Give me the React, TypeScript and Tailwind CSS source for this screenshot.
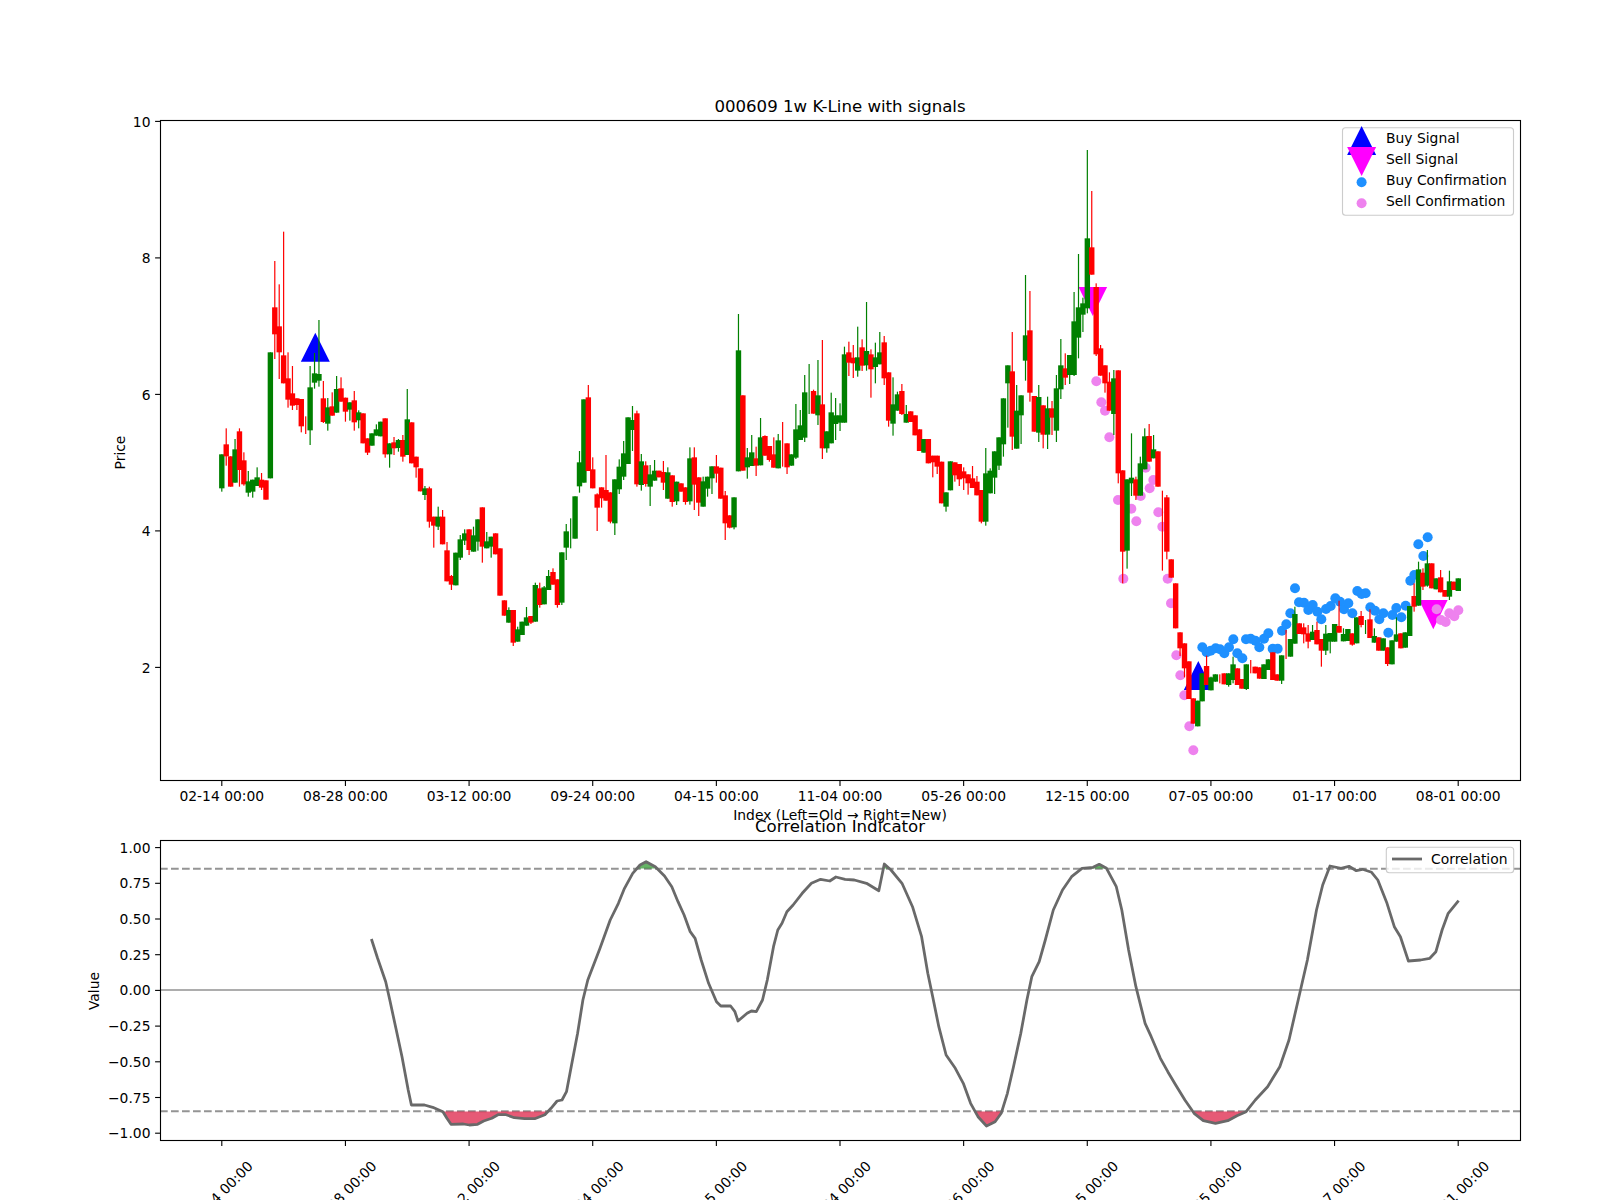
type Row = [number, number, number, number?, number?];
type Seg = { start: number; y0: number; rows: Row[] };

// candle rows: [green?, body top, body bottom, wick top, wick bottom], y in 3x px over y0
const segs: Seg[] = [
  { start: 0, y0: 225, rows: [
    [1,688,790,688,800],[0,658,694,610,722],[0,694,785],[1,673,773,642,773],[0,619,735,610,785],
    [0,706,778,682,782],[1,769,803,738,815],[1,764,800,764,818],[1,757,783,727,783],[0,764,788,744,795],
    [0,766,824],[1,382,760],[0,247,328,108,402],[0,304,382,178,462],[0,391,475,20,475],
    [0,460,524,382,548],[0,505,542,423,555],[0,520,540,520,555],[0,522,604,522,622],[0,600,600,574,627],
    [1,487,616,423,660],[1,445,473,384,491],[1,447,467,285,485],[0,520,591,468,594],[1,547,596,519,617],
    [0,544,572,502,572],[1,492,563,453,563],[0,490,530,457,530],[0,518,560,518,590],[1,532,554,532,587],
    [0,526,592,498,617],[1,562,586,556,610],[0,565,655],[0,640,683,640,690],[1,625,662],
    [1,613,632,598,632],[1,590,634],[0,580,688,580,698],[1,655,688,655,728],[0,652,670,636,690],
    [1,645,669,642,680],
  ] },
  { start: 41, y0: 370, rows: [
    [0,210,260,195,275],[1,148,255,57,255],[0,157,280],[0,260,292,260,323],[0,295,364],
    [1,355,375,348,390],[0,355,455,350,473],[0,440,467,440,533],[1,440,470,410,480],[0,440,523,420,523],
    [0,541,634,516,634],[0,618,644,615,660],[1,548,646],[1,508,563,495,570],[1,490,512,478,525],
    [0,478,540,478,555],[1,496,545,470,545],[1,448,515,448,542],[0,412,530,412,578],[1,514,535,486,535],
    [1,500,530,500,563],[0,490,553],[0,535,677],[0,691,737],[1,720,758,712,758],
    [0,720,818,720,828],[1,778,815,770,815],[1,755,795],[1,742,767,711,767],[0,738,758,738,762],
    [1,645,755,638,755],[0,655,705,638,713],[1,652,703,648,703],[1,618,660,600,660],[0,606,644,595,644],
    [0,628,705,628,713],[1,547,698,547,705],[1,484,533,462,570],[1,500,500,445,535],[1,379,506],
    [1,277,349,243,368],[1,88,338],[0,82,303,45,303],[0,298,355,262,355],[0,373,413,370,483],
    [0,352,385,352,413],[0,360,392,255,392],[0,367,455,367,460],[1,328,460,328,495],[1,290,358,268,372],
    [1,250,320,213,330],[1,142,282],[1,150,180,108,243],[0,130,343,122,350],[1,274,345,252,362],
    [0,286,342,274,350],[1,313,350,285,408],[1,302,332,270,332],[0,302,322],[0,306,338,273,360],
    [1,307,386,292,386],[0,316,396,316,410],[1,335,394,335,405],[0,340,365],[0,352,396,352,404],
    [1,265,394,232,404],[0,262,344,232,420],[0,322,398,322,438],
  ] },
  { start: 109, y0: 290, rows: [
    [1,574,650,560,650],[1,560,596,560,620],[1,529,565,529,612],[0,529,551,495,578],[0,533,626],
    [0,616,700,603,750],[0,676,713,676,715],[1,622,712,622,718],[1,181,544,72,544],[0,316,542],
    [1,502,532,474,566],[1,487,528,435,528],[0,505,527,470,558],[1,442,526,384,526],[0,438,497,436,497],
    [0,468,510,468,515],[0,493,533,442,533],[1,451,535,432,535],[0,500,500,396,530],[0,460,532,460,552],
    [1,493,527],[1,418,503,342,507],[1,406,450,360,450],[1,307,443,255,456],[1,300,300,222,372],
    [0,303,371,299,371],[1,316,376,210,405],[0,343,475,150,507],[1,424,475,424,488],[1,367,460,308,460],
    [1,376,402,324,450],[1,376,398,340,423],[1,193,398,170,398],[0,187,218,155,258],[0,203,220,165,264],
    [1,202,242,110,260],[0,172,227,148,243],[1,183,226,36,242],[0,193,238,178,323],[1,202,231,158,280],
    [1,187,223,126,223],[0,157,265,138,285],[0,247,392,247,410],[1,343,401,262,437],[1,313,362,305,362],
    [0,303,372,282,375],[1,372,398,345,398],[0,364,396],[0,376,436],[0,418,483],
    [1,447,488],[0,447,520],[0,497,517,497,562],[0,497,530,497,552],[0,515,640],
    [1,607,650,607,665],[1,514,601],[0,517,556,517,575],[0,522,568,522,588],[0,544,565,532,600],
    [0,553,580,553,614],[0,565,594,528,594],[0,575,616,558,616],
  ] },
  { start: 172, y0: 140, rows: [
    [0,1050,1145,1050,1150],[1,1000,1145,924,1157],[1,992,1060,985,1060],[1,934,1013,934,1062],[1,892,977,892,990],
    [1,775,913,775,950],[1,676,730,676,863],[0,694,890,576,930],[1,812,926,735,926],[1,766,826,766,912],
    [1,586,662,405,722],[0,571,758,453,785],[0,768,875],[1,771,878,735,906],[0,796,884,796,925],
    [1,805,884,770,927],[0,805,833,783,885],[1,745,872,705,906],[1,676,748,597,777],[0,685,713,640,735],
    [1,645,705,645,732],[1,544,705,456,708],[1,502,593,342,655],[1,490,524,473,576],[1,295,505,30,520],
    [0,322,404,153,404],[0,441,643,430,648],[0,625,707,615,707],[0,676,730,676,758],[0,725,812,697,812],
    [1,715,822,690,885],[0,691,1000,691,1030],[0,991,1235,991,1330],[1,1018,1232,1018,1286],[1,1013,1030,880,1068],
    [0,1018,1067,1010,1080],[1,970,1067,950,1067],[1,889,988,865,988],[0,888,965,852,965],[1,928,955,885,955],
    [0,934,1040],[0,1100,1100,1052,1292],[0,1072,1235,1065,1258],[0,1258,1313],
  ] },
  { start: 216, y0: 540, rows: [
    [0,130,265],[0,277,325,277,348],[0,310,385,310,412],[0,364,477],[0,475,551],
    [1,482,559],[1,400,484],[0,378,435,347,435],[1,412,451,410,451],[1,403,425],
    [0,415,415,403,430],[0,400,433],[1,400,435,400,440],[1,373,420,350,430],[0,385,435],
    [0,417,446],[1,373,447,373,450],[0,380,380,360,400],[0,380,400],[0,382,416],
    [1,373,417],[1,358,390],[0,337,420],[0,403,422],[1,346,422,346,432],
    [0,300,300,270,357],[1,297,350],[1,222,311,200,311],[0,250,282],[0,262,283,250,310],
    [0,280,305,255,325],[1,275,300,255,300],[0,270,313,245,313],[0,297,332,297,380],[1,281,332,255,345],
    [1,279,305,279,340],[1,252,305],[0,258,278,182,278],[1,282,304,265,304],[1,267,303],
    [0,280,314,280,317],[1,232,310],[0,228,255,213,262],[1,260,260,240,282],[0,238,294,208,294],
    [1,288,308,265,308],[0,292,332],[1,295,332],[0,322,372,322,378],[1,301,373],
    [1,283,305,232,305],[0,280,325],[1,277,323],[1,198,288],[0,168,200,130,215],
    [1,88,197,65,197],[0,98,140,85,150],[1,70,137,30,140],[0,70,145],[1,115,148],
    [0,112,157,90,157],[0,150,170],[1,124,170,92,180],[0,125,150],[1,115,153],
  ] },
];

const candles = segs.flatMap((s) =>
  s.rows.map((r, k) => ({
    x: 221.8 + 4.416 * (s.start + k),
    green: r[0] === 1,
    top: s.y0 + r[1] / 3,
    bot: s.y0 + r[2] / 3,
    wt: s.y0 + (r[3] ?? r[1]) / 3,
    wb: s.y0 + (r[4] ?? r[2]) / 3,
  })),
);

// blue dots, 3x px over (1160,540)
const blue = [
  [127,322],[140,337],[152,332],[167,325],[180,328],[193,340],[207,322],[220,298],[232,340],[247,355],
  [258,298],[272,296],[286,302],[298,322],[312,296],[325,280],[338,326],[353,326],[366,272],[379,253],
  [391,220],[405,145],[417,187],[432,188],[445,210],[458,195],[472,215],[484,238],[498,207],[512,198],
  [526,175],[540,185],[552,208],[565,190],[577,220],[592,153],[605,162],[617,160],[631,202],[645,212],
  [658,238],[670,220],[685,278],[697,225],[709,204],[724,232],[737,197],[751,122],[763,105],[775,13],
  [790,48],[803,-8],
].map(([x, y]) => [1160 + x / 3, 540 + y / 3]);

// pink dots, first list 3x px over (980,140), second over (1080,440)
const pink = [
  ...[
    [349,724],[364,787],[375,812],[388,892],[414,1080],[430,1316],[454,1106],[469,1144],[482,1068],[497,983],
    [509,1045],[520,1020],[535,1117],[547,1160],[563,1316],
  ].map(([x, y]) => [980 + x / 3, 140 + y / 3]),
  ...[
    [273,490],[289,646],[301,706],[313,766],[328,859],[340,931],[1070,508],[1083,540],[1097,546],[1108,520],
    [1123,529],[1135,511],
  ].map(([x, y]) => [1080 + x / 3, 440 + y / 3]),
];

// correlation line, taken from two crops with different x scale
const corr = [
  ...[
    [910,507],[925,565],[945,635],[955,690],[970,775],[985,860],[1000,960],[1008,1005],[1040,1005],[1060,1012],
    [1085,1025],[1095,1045],[1105,1063],[1135,1062],[1150,1065],[1170,1063],[1185,1053],[1205,1045],[1220,1034],[1240,1034],
    [1260,1043],[1285,1046],[1310,1046],[1335,1034],[1350,1015],[1365,993],[1377,990],[1388,965],[1398,900],[1415,790],
    [1428,690],[1440,630],[1470,535],[1495,450],[1515,400],[1530,355],[1550,310],[1568,285],
  ].map(([x, y]) => [x / 2.45, 770 + y / 3]),
  ...[
    [10,275],[25,290],[40,318],[52,350],[62,395],[72,435],[82,485],[90,505],[100,570],[112,640],
    [125,695],[132,708],[148,708],[155,725],[160,753],[175,730],[182,723],[190,725],[200,690],[208,630],
    [218,530],[225,480],[232,460],[240,425],[250,405],[265,370],[280,340],[295,328],[310,333],[320,321],
    [335,328],[350,330],[370,340],[390,362],[399,282],[410,300],[428,340],[445,410],[460,500],[470,610],
    [478,680],[488,770],[500,855],[515,895],[528,940],[540,1000],[552,1040],[566,1068],[580,1055],[590,1030],
    [600,970],[610,890],[622,790],[632,690],[640,620],[652,575],[662,510],[675,420],[690,360],[705,320],
    [722,295],[740,292],[750,283],[762,295],[778,350],[787,420],[798,540],[810,650],[825,760],[835,800],
    [850,865],[862,905],[875,945],[890,990],[905,1030],[920,1052],[940,1060],[960,1052],[975,1037],[990,1025],
    [1005,990],[1025,950],[1045,890],[1060,810],[1075,690],[1090,570],[1105,420],[1115,345],[1127,288],[1145,295],
    [1158,289],[1170,302],[1180,298],[1195,307],[1205,330],[1220,400],[1232,470],[1242,500],[1255,573],[1275,570],
    [1290,565],[1300,545],[1310,480],[1320,430],[1337,392],
  ].map(([x, y]) => [640 + x / 1.6333, 770 + y / 3]),
];
const corrPts = corr.map(([x, y]) => `${x.toFixed(1)},${y.toFixed(1)}`).join(' ');

const tickX = Array.from({ length: 11 }, (_, k) => 221.8 + 123.64 * k);
const dates = ['02-14 00:00', '08-28 00:00', '03-12 00:00', '09-24 00:00', '04-15 00:00', '11-04 00:00', '05-26 00:00', '12-15 00:00', '07-05 00:00', '01-17 00:00', '08-01 00:00'];
const priceTicks = [10, 8, 6, 4, 2];
const valueTicks = ['1.00', '0.75', '0.50', '0.25', '0.00', '−0.25', '−0.50', '−0.75', '−1.00'];

function Tri({ x, base, tip, half, color }: { x: number; base: number; tip: number; half: number; color: string }) {
  return <polygon points={`${x - half},${base} ${x + half},${base} ${x},${tip}`} fill={color} />;
}

export default function App() {
  return (
    <div className="h-[1200px] w-[1600px] overflow-hidden bg-white">
      <svg
        width={1600}
        height={1200}
        viewBox="0 0 1600 1200"
        className="block fill-black font-['DejaVu_Sans',sans-serif] text-[13.89px]"
      >
        <defs>
          <clipPath id="under">
            <rect x={160} y={1111.4} width={1360} height={28} />
          </clipPath>
          <clipPath id="over">
            <rect x={160} y={841} width={1090} height={27.6} />
          </clipPath>
        </defs>

        {/* price panel */}
        <text x={840} y={111.7} textAnchor="middle" className="text-[16.6px]">000609 1w K-Line with signals</text>

        <Tri x={315.3} base={361.7} tip={332.7} half={14.5} color="#0000ff" />
        <Tri x={1198.3} base={690} tip={661} half={14.5} color="#0000ff" />
        <Tri x={1092.8} base={287} tip={316} half={14.3} color="#ff00ff" />
        <Tri x={1433.3} base={600} tip={629.3} half={14.3} color="#ff00ff" />
        {blue.map(([x, y], i) => (
          <circle key={i} cx={x} cy={y} r={5} fill="#1e90ff" />
        ))}
        {pink.map(([x, y], i) => (
          <circle key={i} cx={x} cy={y} r={5} fill="#ee82ee" />
        ))}

        {candles.map((c, i) => {
          const col = c.green ? '#008000' : '#ff0000';
          return (
            <g key={i} fill={col}>
              <rect x={c.x - 0.6} y={c.wt} width={1.2} height={c.wb - c.wt} />
              {c.bot > c.top && <rect x={c.x - 2.7} y={c.top} width={5.4} height={c.bot - c.top} />}
            </g>
          );
        })}

        <rect x={160.5} y={120.5} width={1360} height={660} fill="none" stroke="#000" strokeWidth={1.11} />
        {priceTicks.map((v, i) => {
          const y = 121.4 + i * 136.5;
          return (
            <g key={v}>
              <line x1={155.1} x2={160} y1={y} y2={y} stroke="#000" strokeWidth={1.11} />
              <text x={150.5} y={y + 5.5} textAnchor="end">{v}</text>
            </g>
          );
        })}
        {tickX.map((x, i) => (
          <g key={x}>
            <line x1={x} x2={x} y1={781} y2={785.9} stroke="#000" strokeWidth={1.11} />
            <text x={x} y={800.5} textAnchor="middle">{dates[i]}</text>
          </g>
        ))}
        <text x={124.5} y={452.5} textAnchor="middle" transform="rotate(-90 124.5 452.5)">Price</text>
        <text x={840} y={820} textAnchor="middle">Index (Left=Old → Right=New)</text>

        {/* price legend */}
        <rect x={1342.5} y={127.7} width={171} height={87.6} rx={3} fill="#fff" fillOpacity={0.8} stroke="#cccccc" strokeWidth={1.11} />
        <Tri x={1361.6} base={155} tip={126} half={14.5} color="#0000ff" />
        <Tri x={1361.6} base={147} tip={176} half={14.5} color="#ff00ff" />
        <circle cx={1361.6} cy={182.3} r={5} fill="#1e90ff" />
        <circle cx={1361.6} cy={203.3} r={5} fill="#ee82ee" />
        <text x={1386} y={143.3}>Buy Signal</text>
        <text x={1386} y={164.3}>Sell Signal</text>
        <text x={1386} y={185.2}>Buy Confirmation</text>
        <text x={1386} y={206.2}>Sell Confirmation</text>

        {/* correlation panel */}
        <text x={840} y={831.7} textAnchor="middle" className="text-[16.6px]">Correlation Indicator</text>

        <line x1={160} x2={1520} y1={868.8} y2={868.8} stroke="#949494" strokeWidth={2.08} strokeDasharray="7.7 3.3" />
        <line x1={160} x2={1520} y1={1111.2} y2={1111.2} stroke="#949494" strokeWidth={2.08} strokeDasharray="7.7 3.3" />
        <line x1={160} x2={1520} y1={990} y2={990} stroke="#adadad" strokeWidth={2.08} />
        <polygon points={corrPts} fill="#dc143c" fillOpacity={0.7} clipPath="url(#under)" />
        <polygon points={corrPts} fill="#008000" fillOpacity={0.6} clipPath="url(#over)" />
        <polyline points={corrPts} fill="none" stroke="#696969" strokeWidth={2.78} strokeLinejoin="round" />

        <rect x={160.5} y={840.5} width={1360} height={300} fill="none" stroke="#000" strokeWidth={1.11} />
        {valueTicks.map((v, i) => {
          const y = 847.6 + i * 35.7;
          return (
            <g key={v}>
              <line x1={155.1} x2={160} y1={y} y2={y} stroke="#000" strokeWidth={1.11} />
              <text x={150.5} y={y + 5} textAnchor="end">{v}</text>
            </g>
          );
        })}
        {tickX.map((x, i) => (
          <g key={x}>
            <line x1={x} x2={x} y1={1141} y2={1145.9} stroke="#000" strokeWidth={1.11} />
            <text x={x - 1.5} y={1198.5} textAnchor="middle" transform={`rotate(-45 ${x - 1.5} 1193.5)`}>{dates[i]}</text>
          </g>
        ))}
        <text x={99} y={991} textAnchor="middle" transform="rotate(-90 99 991)">Value</text>

        {/* correlation legend */}
        <rect x={1386.3} y={847.3} width={127.4} height={25.4} rx={3} fill="#fff" fillOpacity={0.8} stroke="#cccccc" strokeWidth={1.11} />
        <line x1={1392} x2={1422} y1={859} y2={859} stroke="#696969" strokeWidth={2.78} />
        <text x={1431} y={864.3}>Correlation</text>
      </svg>
    </div>
  );
}
